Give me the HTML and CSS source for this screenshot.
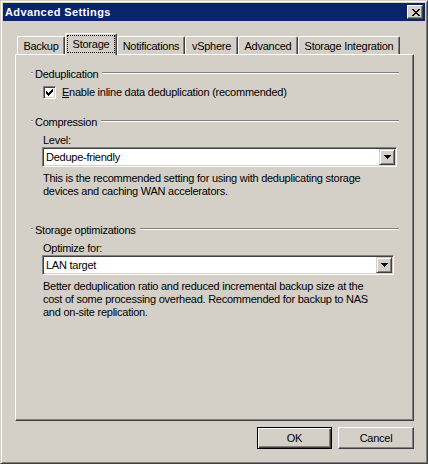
FILE: index.html
```html
<!DOCTYPE html>
<html>
<head>
<meta charset="utf-8">
<title>Advanced Settings</title>
<link rel="stylesheet" href="styles.css">
</head>
<body>
<div class="window">
  <div class="titlebar">
    <span class="title">Advanced Settings</span>
    <div class="close">
      <svg width="8" height="7" viewBox="0 0 8 7" shape-rendering="crispEdges"><path fill="#000" d="M0 0h2v1h-2zM6 0h2v1h-2zM1 1h2v1h-2zM5 1h2v1h-2zM2 2h4v1h-4zM3 3h2v1h-2zM2 4h4v1h-4zM1 5h2v1h-2zM5 5h2v1h-2zM0 6h2v1h-2zM6 6h2v1h-2z"/></svg>
    </div>
  </div>
  <div class="body">
    <div class="tabs">
      <div class="tab t-backup">Backup</div>
      <div class="tab active t-storage"><span class="focus">Storage</span></div>
      <div class="tab t-notif">Notifications</div>
      <div class="tab t-vsphere">vSphere</div>
      <div class="tab t-adv">Advanced</div>
      <div class="tab t-integ">Storage Integration</div>
    </div>
    <div class="panel">
      <div class="group-head"><span class="tick"></span><span class="gl">Deduplication</span><span class="line"></span></div>
      <div class="check">
        <span class="box"><svg width="7" height="7" viewBox="0 0 7 7" shape-rendering="crispEdges"><path fill="#000" d="M6 0h1v1h-1zM5 1h2v1h-2zM0 2h1v1h-1zM4 2h3v1h-3zM0 3h2v1h-2zM3 3h3v1h-3zM0 4h5v1h-5zM1 5h3v1h-3zM2 6h1v1h-1z"/></svg></span>
        <span class="check-label"><u>E</u>nable inline data deduplication (recommended)</span>
      </div>

      <div class="group-head g-comp"><span class="tick"></span><span class="gl">Compression</span><span class="line"></span></div>
      <div class="field-label">Level:</div>
      <div class="combo combo-level">
        <span class="combo-text">Dedupe-friendly</span>
        <span class="drop"><svg width="7" height="4" viewBox="0 0 7 4" shape-rendering="crispEdges"><path fill="#000" d="M0 0h7v1h-7zM1 1h5v1h-5zM2 2h3v1h-3zM3 3h1v1h-1z"/></svg></span>
      </div>
      <p class="desc">This is the recommended setting for using with deduplicating storage<br>devices and caching WAN accelerators.</p>

      <div class="group-head g-opt"><span class="tick"></span><span class="gl">Storage optimizations</span><span class="line"></span></div>
      <div class="field-label">Optimize for:</div>
      <div class="combo combo-opt">
        <span class="combo-text">LAN target</span>
        <span class="drop"><svg width="7" height="4" viewBox="0 0 7 4" shape-rendering="crispEdges"><path fill="#000" d="M0 0h7v1h-7zM1 1h5v1h-5zM2 2h3v1h-3zM3 3h1v1h-1z"/></svg></span>
      </div>
      <p class="desc">Better deduplication ratio and reduced incremental backup size at the<br>cost of some processing overhead. Recommended for backup to NAS<br>and on-site replication.</p>
    </div>
    <div class="buttons">
      <div class="btn default">OK</div>
      <div class="btn cancel">Cancel</div>
    </div>
  </div>
</div>
</body>
</html>
```

FILE: styles.css
```css
* { box-sizing: border-box; }
html, body { margin: 0; padding: 0; background: #d4d0c8; }
body {
  font-family: "Liberation Sans", Arial, sans-serif;
  font-size: 11px;
  color: #000;
  letter-spacing: -0.25px;
}

.window {
  width: 428px;
  height: 464px;
  background: #d4d0c8;
  border: 1px solid;
  border-color: #d4d0c8 #404040 #404040 #d4d0c8;
  box-shadow: inset 1px 1px #fff, inset -1px -1px #808080;
  padding: 2px;
  display: flex;
  flex-direction: column;
}

.titlebar {
  height: 18px;
  flex: none;
  background: #0a246a;
  display: flex;
  align-items: center;
  padding-left: 2px;
}
.title {
  flex: 1;
  color: #fff;
  font-weight: bold;
  letter-spacing: 0.4px;
  line-height: 14px;
}
.close {
  width: 16px;
  height: 14px;
  margin-right: 2px;
  background: #d4d0c8;
  border: 1px solid;
  border-color: #fff #404040 #404040 #fff;
  box-shadow: inset -1px -1px #808080;
  display: flex;
  align-items: center;
  justify-content: center;
  padding: 0 0 0 1px;
}
.close svg { display: block; }

.body {
  flex: 1;
  padding: 12px 11px 0 12px;
  display: flex;
  flex-direction: column;
}

.tabs {
  display: flex;
  align-items: flex-end;
  height: 21px;
  padding-left: 2px;
  position: relative;
  z-index: 1;
}
.tab {
  height: 18px;
  display: flex;
  align-items: center;
  justify-content: center;
  background: #d4d0c8;
  border-top: 1px solid #fff;
  border-left: 1px solid #fff;
  border-right: 1px solid #404040;
  box-shadow: inset -1px 0 #808080;
  border-top-left-radius: 2px;
  border-top-right-radius: 2px;
  white-space: nowrap;
}
.tab.active {
  height: 22px;
  margin-bottom: -1px;
  align-items: flex-start;
}
.focus {
  display: flex;
  align-items: center;
  justify-content: center;
  height: 18px;
  width: 100%;
  margin: 1px 1px 0 1px;
  border: 1px dotted #000;
}
.t-backup { width: 48px; }
.t-storage { width: 52px; }
.t-notif { width: 68px; }
.t-vsphere { width: 53px; }
.t-adv { width: 60px; }
.t-integ { width: 102px; }

.panel {
  height: 367px;
  flex: none;
  border: 1px solid;
  border-color: #fff #404040 #404040 #fff;
  box-shadow: inset -1px -1px #808080;
  padding: 11px 14px 0 15px;
}

.group-head {
  display: flex;
  align-items: flex-start;
  height: 16px;
}
.tick, .line {
  margin-top: 6px;
  height: 2px;
  border-top: 1px solid #808080;
  border-bottom: 1px solid #fff;
}
.tick { width: 2px; flex: none; }
.line { flex: 1; margin-left: 4px; }
.gl {
  padding-top: 1px;
  margin-left: 2px;
  line-height: 14px;
}
.g-comp { margin-top: 15px; }
.g-opt { margin-top: 24px; }

.check {
  margin-top: 4px;
  margin-left: 12px;
  height: 13px;
  display: flex;
  align-items: center;
}
.box {
  width: 13px;
  height: 13px;
  background: #fff;
  border: 1px solid;
  border-color: #808080 #fff #fff #808080;
  box-shadow: inset 1px 1px #404040, inset -1px -1px #d4d0c8;
  display: flex;
  align-items: center;
  justify-content: center;
  flex: none;
}
.box svg { display: block; }
.check-label {
  margin-left: 6px;
  line-height: 13px;
}
.check-label u { text-decoration: underline; }

.field-label {
  margin-top: 3px;
  margin-left: 12px;
  line-height: 14px;
}

.combo {
  margin-left: 11px;
  height: 20px;
  background: #fff;
  border: 1px solid;
  border-color: #808080 #fff #fff #808080;
  box-shadow: inset 1px 1px #404040, inset -1px -1px #d4d0c8;
  padding: 1px;
  display: flex;
}
.combo-level { width: 355px; }
.combo-opt { width: 352px; }
.combo-text {
  flex: 1;
  line-height: 16px;
  padding-left: 2px;
}
.drop {
  width: 16px;
  height: 16px;
  flex: none;
  background: #d4d0c8;
  border: 1px solid;
  border-color: #d4d0c8 #404040 #404040 #d4d0c8;
  box-shadow: inset 1px 1px #fff, inset -1px -1px #808080;
  display: flex;
  align-items: center;
  justify-content: center;
}
.drop svg { display: block; }

.desc {
  margin: 5px 0 0 12px;
  line-height: 13px;
}

.buttons {
  margin-top: 6px;
  display: flex;
  justify-content: flex-end;
  gap: 6px;
}
.btn {
  height: 22px;
  width: 75px;
  display: flex;
  align-items: center;
  justify-content: center;
  background: #d4d0c8;
  border: 1px solid;
  border-color: #fff #404040 #404040 #fff;
  box-shadow: inset -1px -1px #808080;
}
.btn.cancel { width: 76px; }
.btn.default {
  border-color: #000;
  box-shadow: inset 1px 1px #fff, inset -1px -1px #404040, inset -2px -2px #808080;
}
```
